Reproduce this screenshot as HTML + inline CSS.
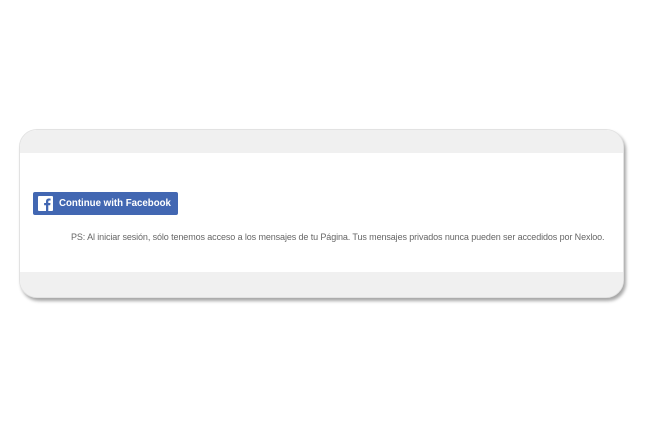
<!DOCTYPE html>
<html><head><meta charset="utf-8"><style>
html,body{margin:0;padding:0;background:#fff;width:651px;height:444px;overflow:hidden;font-family:"Liberation Sans",sans-serif}
.card{position:absolute;left:19px;top:129px;width:605px;height:169px;border-radius:18px;background:#fff;overflow:hidden;box-shadow:2px 3px 3px rgba(0,0,0,0.35);border:1px solid #e2e2e2;box-sizing:border-box}
.hd{position:absolute;left:0;top:0;right:0;height:23px;background:#f0f0f0}
.ft{position:absolute;left:0;bottom:0;right:0;height:25px;background:#f0f0f0}
.btn{position:absolute;left:33px;top:192px;width:145px;height:23px;background:#4267b2;border-radius:2px;color:#fff;font-weight:bold;font-size:9.7px;line-height:23px}
.btn svg{position:absolute;left:5px;top:4px}
.btn span{position:absolute;left:26px;top:0}
.ps{position:absolute;left:71px;top:232px;font-size:9px;color:#666;white-space:nowrap;letter-spacing:-0.105px}
</style></head><body>
<div class="card"><div class="hd"></div><div class="ft"></div></div>
<div class="btn"><svg width="15" height="15" viewBox="0 0 15 15"><rect width="15" height="15" rx="1" fill="#fff"/><path d="M10.3 15V9.2h1.9l.3-2.2h-2.2V5.6c0-.6.2-1.1 1.1-1.1h1.2V2.6c-.2 0-.9-.1-1.7-.1-1.7 0-2.9 1-2.9 3V7H6.1v2.2H8V15z" fill="#4267b2"/></svg><span>Continue with Facebook</span></div>
<div class="ps">PS: Al iniciar sesión, sólo tenemos acceso a los mensajes de tu Página. Tus mensajes privados nunca pueden ser accedidos por Nexloo.</div>
</body></html>
